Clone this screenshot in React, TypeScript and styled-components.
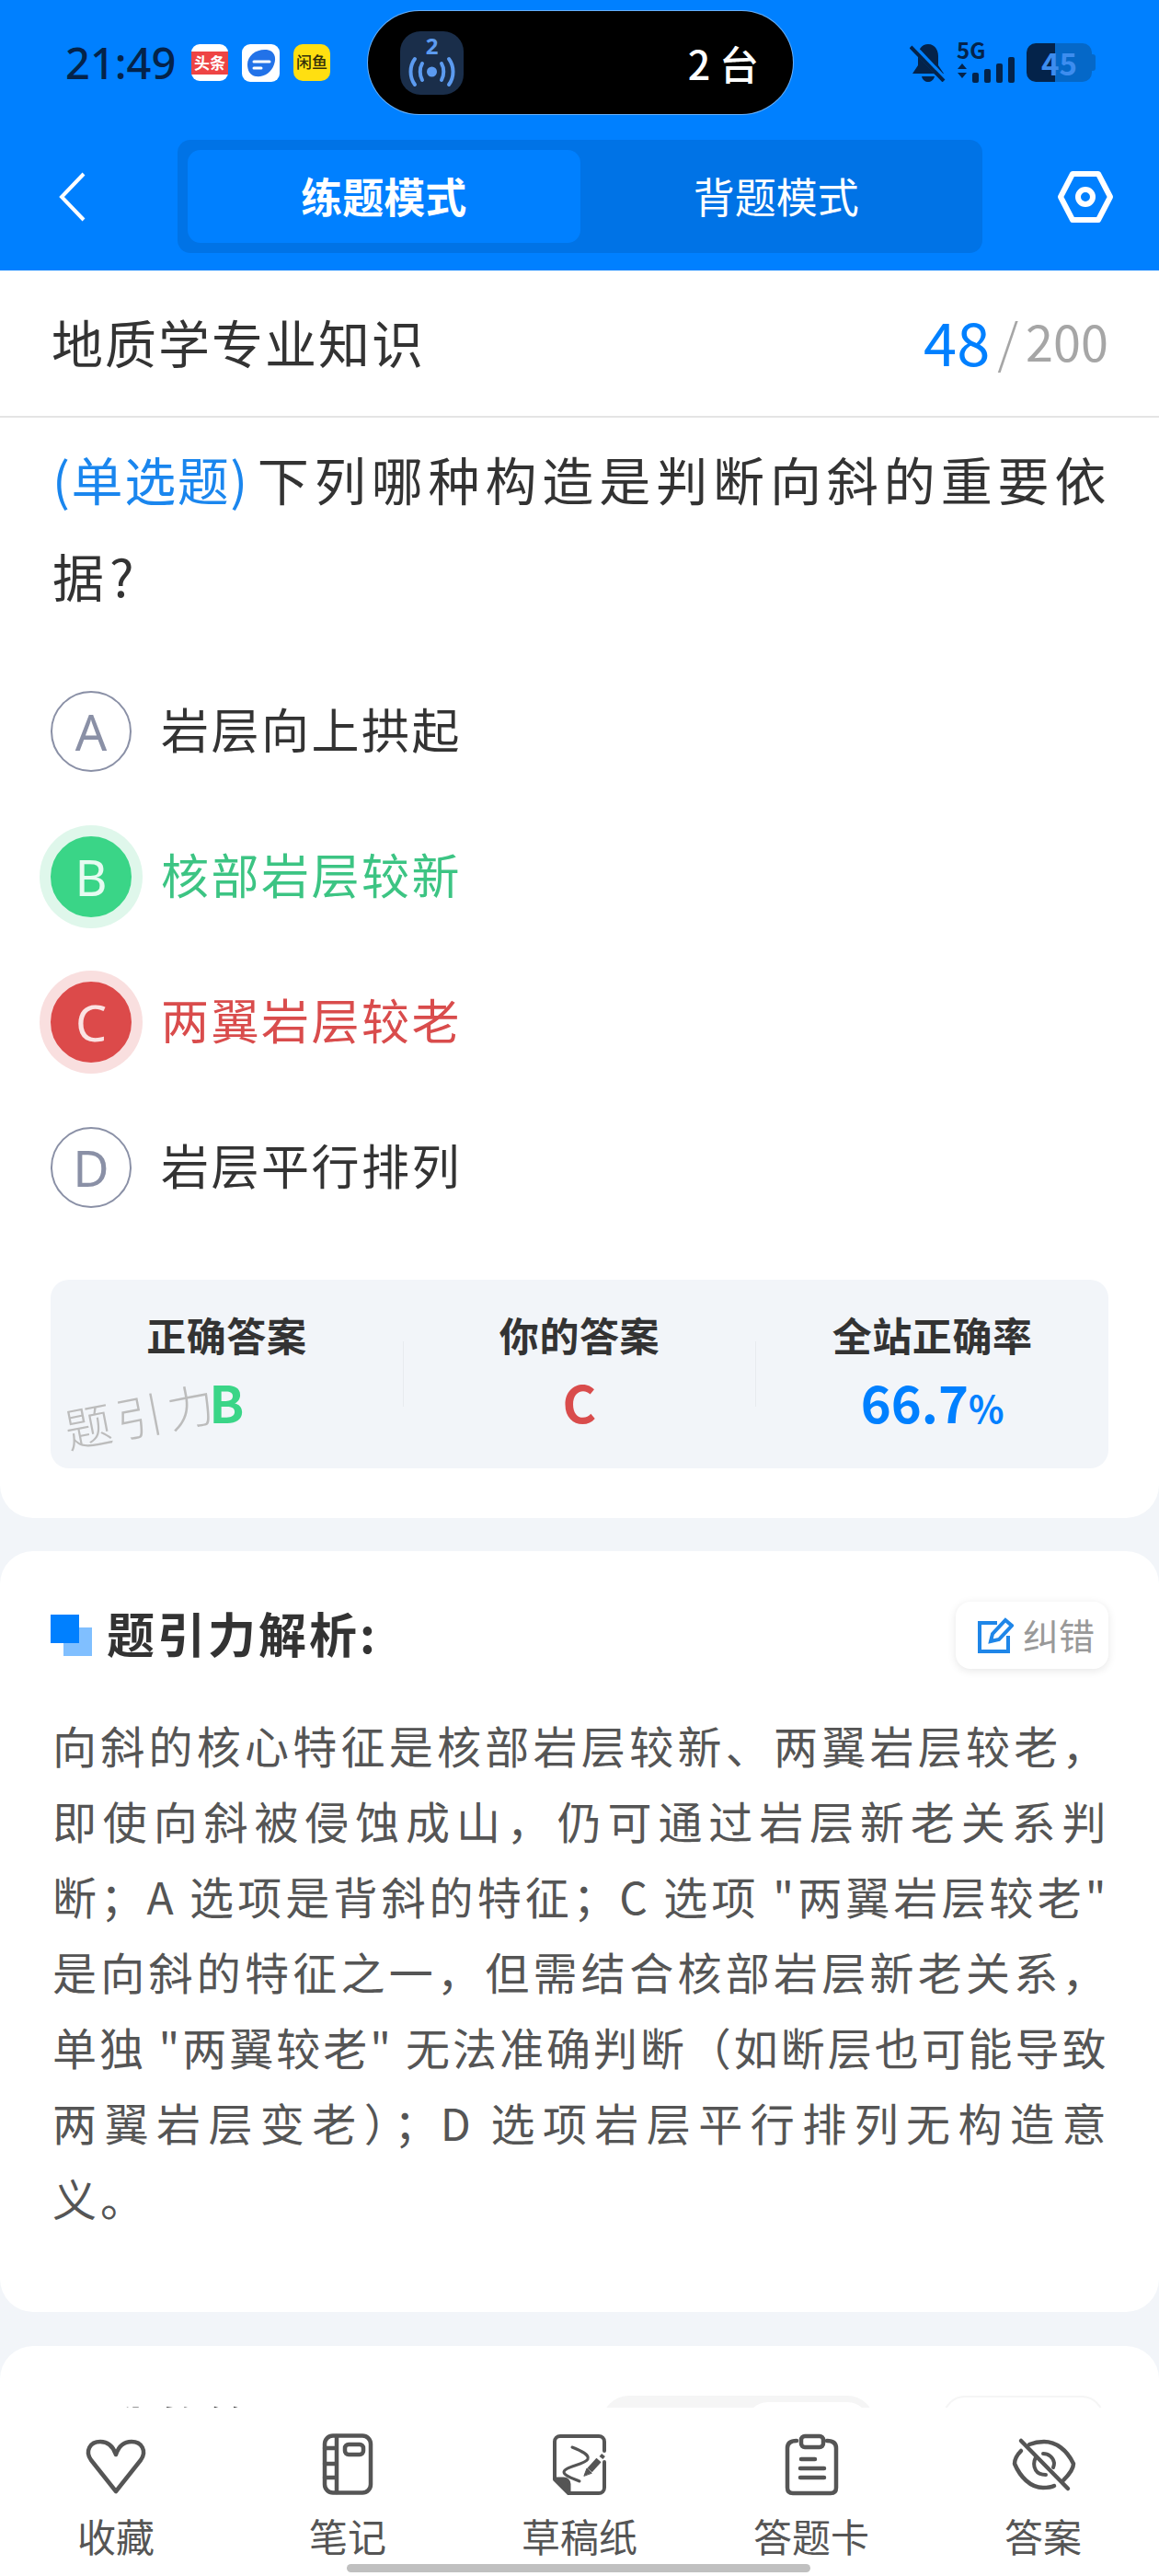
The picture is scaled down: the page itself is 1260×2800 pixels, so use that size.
import styled, { createGlobalStyle } from 'styled-components';

const FONT = '"Noto Sans CJK SC", "Noto Sans", sans-serif';
const BLUE = '#0080ff';
const ICON = '#555555';
const STATUS = '#04234a';

const GlobalStyle = createGlobalStyle`
  html, body {
    margin: 0;
    padding: 0;
    background: #f2f5f9;
    font-family: ${FONT};
  }
  * {
    box-sizing: border-box;
  }
`;

type OptionState = 'normal' | 'right' | 'wrong';

const options: { key: string; text: string; state: OptionState }[] = [
  { key: 'A', text: '岩层向上拱起', state: 'normal' },
  { key: 'B', text: '核部岩层较新', state: 'right' },
  { key: 'C', text: '两翼岩层较老', state: 'wrong' },
  { key: 'D', text: '岩层平行排列', state: 'normal' },
];

const optionColors = {
  normal: { text: '#333333', fill: 'transparent', ring: 'transparent', letter: '#8a90a6', border: '#8a90a6' },
  right: { text: '#3cc483', fill: '#3ad587', ring: '#dff7eb', letter: '#e6fbf1', border: '#3ad587' },
  wrong: { text: '#d94c4c', fill: '#dc4a4a', ring: '#f9dfdf', letter: '#fbe3e3', border: '#dc4a4a' },
};

const analysisLines = [
  '向斜的核心特征是核部岩层较新、两翼岩层较老，',
  '即使向斜被侵蚀成山，仍可通过岩层新老关系判',
  '断；A 选项是背斜的特征；C 选项 "两翼岩层较老"',
  '是向斜的特征之一，但需结合核部岩层新老关系，',
  '单独 "两翼较老" 无法准确判断（如断层也可能导致',
  '两翼岩层变老）；D 选项岩层平行排列无构造意',
  '义。',
];

const HeartIcon = () => (
  <TabSvg viewBox="0 0 72 72" width={72} height={72}>
    <path d="M36 64 L9 30 C2 20 8 10 19 10 C27 10 33 15 36 24 C39 15 45 10 53 10 C64 10 70 20 63 30 Z" />
  </TabSvg>
);

const NoteIcon = () => (
  <TabSvg viewBox="0 0 72 72" width={72} height={72}>
    <rect x="11" y="3.5" width="50" height="62" rx="9" />
    <path d="M24 4 V65 M11 17 H24 M11 34 H24 M11 49 H24" />
    <rect x="33" y="13" width="20" height="11" rx="4" />
  </TabSvg>
);

const DraftIcon = () => (
  <TabSvg viewBox="0 0 72 72" width={72} height={72}>
    <path d="M63 20 V10 A6 6 0 0 0 57 4 H15 A6 6 0 0 0 9 10 V51 L24 66 H57 A6 6 0 0 0 63 60 V32" strokeWidth={4} />
    <path d="M9 50 H19 A6 6 0 0 1 25 56 V66 Z" fill={ICON} strokeWidth={3} />
    <path d="M28 16 C38 20 47 24 45 29 C42 35 19 37 19 43 C19 47 29 50 36 53" strokeWidth={3} />
    <path d="M47 41 L57 30" strokeWidth={7} strokeLinecap="butt" />
    <path d="M41 47 L44 39 L49 44 Z" fill={ICON} strokeWidth={1} />
    <path d="M59.5 27.5 L62 24.5" strokeWidth={5} strokeLinecap="butt" />
  </TabSvg>
);

const CardIcon = () => (
  <TabSvg viewBox="0 0 72 72" width={72} height={72}>
    <path d="M20 9 C13 9 10 12 10 17 V60 C10 64 12 66 16 66 H57 C61 66 63 64 63 60 V17 C63 12 60 9 53 9" />
    <rect x="25" y="4" width="24" height="12" rx="4" />
    <path d="M25 29 H40 M24 39 H50 M24 49 H50" strokeWidth={4.5} />
  </TabSvg>
);

const EyeOffIcon = () => (
  <TabSvg viewBox="0 0 76 72" width={76} height={72}>
    <path d="M7 34 C7 30 10 24 14 20 M23 13 C28 11 34 10 39 10 C52 10 64 19 71 34 C71 39 66 46 60 52 M50 58 C46 60 42 60 38 60 C24 60 13 48 7 34" />
    <path d="M14 9 L65 61" />
    <path d="M30 27 C28 31 27 36 30 41 C33 46 38 46 41 46 M38 23 C44 23 49 27 50 33 C50 35 50 36 49 38" strokeWidth={4} />
  </TabSvg>
);

const tabs = [
  { label: '收藏', icon: <HeartIcon /> },
  { label: '笔记', icon: <NoteIcon /> },
  { label: '草稿纸', icon: <DraftIcon /> },
  { label: '答题卡', icon: <CardIcon /> },
  { label: '答案', icon: <EyeOffIcon /> },
];

const App = () => {
  return (
    <Page>
      <GlobalStyle />
      <Header>
        <StatusBar>
          <Time>21:49</Time>
          <AppIcons>
            <ToutiaoIcon>
              <span>头条</span>
            </ToutiaoIcon>
            <svg viewBox="0 0 41 41" width={41} height={41}>
              <rect width="41" height="41" rx="9" fill="#fff" />
              <path d="M6 22 C6 12 16 5 27 6 C35 7 38 14 35 22 C32 31 24 36 15 35 C9 34 6 29 6 22 Z" fill="#2272e8" />
              <path d="M13 19 H30 M13 26 H21" stroke="#fff" strokeWidth={3} strokeLinecap="round" />
            </svg>
            <XianyuIcon>闲鱼</XianyuIcon>
          </AppIcons>
          <Island>
            <LiveBadge>
              <svg viewBox="0 0 69 69" width={69} height={69}>
                <text x="34.5" y="25" textAnchor="middle" fontSize="24" fontWeight="700" fill="#5c9bf0" fontFamily="Noto Sans">
                  2
                </text>
                <circle cx="34.5" cy="44" r="5.5" fill="#5c9bf0" />
                <g fill="none" stroke="#5c9bf0" strokeWidth="4" strokeLinecap="round">
                  <path d="M24 35 C21 40 21 48 24 53 M45 35 C48 40 48 48 45 53" />
                  <path d="M16 30 C10 38 10 50 16 58 M53 30 C59 38 59 50 53 58" />
                </g>
              </svg>
            </LiveBadge>
            <IslandText>2 台</IslandText>
          </Island>
          <StatusRight>
            <svg viewBox="0 0 40 42" width={40} height={42}>
              <path d="M20 1 C27 1 31 7 31 14 V24 L37 33 H3 L9 24 V14 C9 7 13 1 20 1 Z" fill={STATUS} />
              <path d="M13 36 H27 C26 40 23 42 20 42 C17 42 14 40 13 36 Z" fill={STATUS} />
              <path d="M2 2 L38 40" stroke={BLUE} strokeWidth={7} />
              <path d="M1 4 L37 41" stroke={STATUS} strokeWidth={4} />
            </svg>
            <SignalGroup>
              <FiveG>5G</FiveG>
              <svg viewBox="0 0 66 29" width={66} height={29}>
                <path d="M2 13 L7 7 L12 13 Z M2 17 L12 17 L7 23 Z" fill={STATUS} />
                <rect x="18" y="17" width="7" height="11" rx="2" fill={STATUS} />
                <rect x="31" y="13" width="7" height="15" rx="2" fill={STATUS} />
                <rect x="44" y="7" width="7" height="21" rx="2" fill={STATUS} />
                <rect x="57" y="0" width="7" height="28" rx="2" fill={STATUS} />
              </svg>
            </SignalGroup>
            <Battery>
              <BatteryValue>45</BatteryValue>
            </Battery>
            <BatteryCap />
          </StatusRight>
        </StatusBar>
        <NavBar>
          <svg viewBox="0 0 30 54" width={30} height={54}>
            <path d="M28 2 L4 27 L28 52" fill="none" stroke="#fff" strokeWidth={4} />
          </svg>
          <Segment>
            <SegmentTab $active>练题模式</SegmentTab>
            <SegmentTab>背题模式</SegmentTab>
          </Segment>
          <SettingIcon viewBox="0 0 66 60" width={66} height={60}>
            <path d="M6 30 L19 5 H47 L60 30 L47 55 H19 Z" />
            <circle cx="33" cy="30" r="8" />
          </SettingIcon>
        </NavBar>
      </Header>

      <QuestionCard>
        <SubjectRow>
          <SubjectName>地质学专业知识</SubjectName>
          <Progress>
            <ProgressNow>48</ProgressNow>
            <ProgressSlash>/</ProgressSlash>
            <ProgressTotal>200</ProgressTotal>
          </Progress>
        </SubjectRow>
        <QuestionBody>
          <QuestionText>
            <QuestionType>(单选题)</QuestionType>
            下列哪种构造是判断向斜的重要依据?
          </QuestionText>
          <OptionList>
            {options.map((option) => (
              <OptionRow key={option.key}>
                <OptionBadge $state={option.state}>{option.key}</OptionBadge>
                <OptionText $state={option.state}>{option.text}</OptionText>
              </OptionRow>
            ))}
          </OptionList>
          <Stats>
            <StatColumn>
              <StatLabel>正确答案</StatLabel>
              <StatValue $color="#3ad587">B</StatValue>
            </StatColumn>
            <StatDivider />
            <StatColumn>
              <StatLabel>你的答案</StatLabel>
              <StatValue $color="#d94c4c">C</StatValue>
            </StatColumn>
            <StatDivider />
            <StatColumn>
              <StatLabel>全站正确率</StatLabel>
              <StatValue $color={BLUE}>
                66.7<Percent>%</Percent>
              </StatValue>
            </StatColumn>
            <Watermark>题引力</Watermark>
          </Stats>
        </QuestionBody>
      </QuestionCard>

      <AnalysisCard>
        <SectionHead>
          <SectionTitle>
            <TitleMark>
              <svg viewBox="0 0 45 45" width={45} height={45}>
                <rect x="14" y="14" width="31" height="31" fill="#80bfff" />
                <rect x="0" y="0" width="31" height="31" fill={BLUE} />
              </svg>
            </TitleMark>
            <TitleText>题引力解析:</TitleText>
          </SectionTitle>
          <FixButton>
            <svg viewBox="0 0 40 40" width={40} height={40}>
              <g fill="none" stroke="#1f86e8" strokeWidth={4}>
                <path d="M22 6 H3 V37 H34 V20" />
                <path d="M15 26 L17 18 L31 3 L38 9 L24 24 Z" />
              </g>
            </svg>
            <FixLabel>纠错</FixLabel>
          </FixButton>
        </SectionHead>
        <AnalysisText>
          {analysisLines.map((line, index) => (
            <AnalysisLine key={line} $last={index === analysisLines.length - 1}>
              {line}
            </AnalysisLine>
          ))}
        </AnalysisText>
      </AnalysisCard>

      <NoteCard>
        <NoteTitle>我的笔记</NoteTitle>
        <NoteSwitch>
          <NoteSwitchThumb />
        </NoteSwitch>
        <NoteButton />
      </NoteCard>

      <TabBar>
        {tabs.map((tab) => (
          <TabItem key={tab.label}>
            {tab.icon}
            <TabLabel>{tab.label}</TabLabel>
          </TabItem>
        ))}
        <HomeIndicator />
      </TabBar>
    </Page>
  );
};

export default App;

const Page = styled.div`
  position: relative;
  width: 1260px;
  height: 2800px;
  overflow: hidden;
  background: #f2f5f9;
`;

const Header = styled.header`
  height: 294px;
  background: ${BLUE};
`;

const StatusBar = styled.div`
  display: flex;
  align-items: center;
  height: 136px;
  margin-bottom: 16px;
  padding-left: 71px;
`;

const Time = styled.div`
  width: 118px;
  font-size: 47px;
  line-height: 50px;
  font-weight: 500;
  color: ${STATUS};
  font-family: 'Noto Sans', sans-serif;
  white-space: nowrap;
`;

const AppIcons = styled.div`
  display: flex;
  align-items: center;
  gap: 15px;
  margin-left: 19px;
`;

const ToutiaoIcon = styled.div`
  display: flex;
  align-items: center;
  justify-content: center;
  width: 40px;
  height: 40px;
  border-radius: 9px;
  background: #fff;
  span {
    display: block;
    width: 40px;
    height: 25px;
    background: #ee4444;
    color: #fff;
    font-size: 17px;
    line-height: 24px;
    font-weight: 700;
    text-align: center;
    white-space: nowrap;
  }
`;

const XianyuIcon = styled.div`
  width: 40px;
  height: 40px;
  border-radius: 10px;
  background: #ffdf11;
  color: #33300a;
  font-size: 17px;
  line-height: 38px;
  font-weight: 500;
  text-align: center;
  white-space: nowrap;
`;

const Island = styled.div`
  display: flex;
  align-items: center;
  width: 462px;
  height: 112px;
  margin-left: 41px;
  padding: 0 37px 0 35px;
  border-radius: 56px;
  background: #000;
  box-shadow: 0 0 0 1px rgba(190, 215, 245, 0.55);
`;

const LiveBadge = styled.div`
  display: flex;
  width: 69px;
  height: 69px;
  border-radius: 22px;
  background: #1a2e4a;
`;

const IslandText = styled.div`
  margin-left: auto;
  color: #fff;
  font-size: 43px;
  line-height: 50px;
  font-weight: 500;
  white-space: nowrap;
`;

const StatusRight = styled.div`
  display: flex;
  align-items: center;
  margin-left: 127px;
`;

const SignalGroup = styled.div`
  display: flex;
  flex-direction: column;
  margin-left: 10px;
  width: 66px;
`;

const FiveG = styled.div`
  margin-left: 1px;
  font-size: 24px;
  line-height: 17px;
  font-weight: 700;
  color: ${STATUS};
`;

const Battery = styled.div`
  display: flex;
  align-items: center;
  justify-content: center;
  width: 71px;
  height: 42px;
  margin-left: 11px;
  border-radius: 10px;
  background: linear-gradient(90deg, #04234a 0 43%, #0568c8 43% 100%);
`;

const BatteryValue = styled.span`
  font-size: 33px;
  line-height: 42px;
  font-weight: 700;
  color: #3d8def;
`;

const BatteryCap = styled.div`
  width: 4px;
  height: 18px;
  border-radius: 0 3px 3px 0;
  background: #0568c8;
`;

const NavBar = styled.div`
  display: flex;
  align-items: center;
  height: 123px;
  padding-left: 63px;
`;

const Segment = styled.div`
  display: grid;
  grid-template-columns: 1fr 1fr;
  width: 875px;
  height: 123px;
  margin-left: 100px;
  padding: 11px;
  border-radius: 14px;
  background: #0073e6;
`;

const SegmentTab = styled.div<{ $active?: boolean }>`
  display: flex;
  align-items: center;
  justify-content: center;
  padding-bottom: 3px;
  border-radius: 14px;
  background: ${(p) => (p.$active ? BLUE : 'transparent')};
  color: #fff;
  font-size: 45px;
  font-weight: ${(p) => (p.$active ? 700 : 400)};
`;

const SettingIcon = styled.svg`
  margin-left: 79px;
  fill: none;
  stroke: #fff;
  stroke-width: 6;
  stroke-linejoin: round;
`;

const QuestionCard = styled.section`
  height: 1356px;
  border-radius: 0 0 36px 36px;
  background: #fff;
`;

const SubjectRow = styled.div`
  display: flex;
  align-items: center;
  justify-content: space-between;
  height: 160px;
  padding: 0 55px 6px 56px;
  border-bottom: 2px solid #e4e4e4;
`;

const SubjectName = styled.div`
  font-size: 56px;
  letter-spacing: 2px;
  color: #333;
`;

const Progress = styled.div`
  display: flex;
  align-items: center;
  line-height: 80px;
`;

const ProgressNow = styled.span`
  margin-left: 1px;
  font-size: 65px;
  color: ${BLUE};
`;

const ProgressSlash = styled.span`
  margin: 0 8px;
  font-size: 58px;
  font-weight: 300;
  color: #a6a6a6;
`;

const ProgressTotal = styled.span`
  font-size: 54px;
  color: #a6a6a6;
`;

const QuestionBody = styled.div`
  padding: 13px 55px 0;
`;

const QuestionText = styled.div`
  height: 210px;
  margin-right: -10px;
  padding-left: 2px;
  font-size: 56px;
  line-height: 105px;
  letter-spacing: 5.9px;
  color: #333;
`;

const QuestionType = styled.span`
  margin-right: 9px;
  color: #1a86ee;
  letter-spacing: 1.6px;
`;

const OptionList = styled.div`
  display: flex;
  flex-direction: column;
  gap: 70px;
  margin-top: 74px;
`;

const OptionRow = styled.div`
  display: flex;
  align-items: center;
  height: 88px;
`;

const OptionBadge = styled.div<{ $state: OptionState }>`
  display: flex;
  align-items: center;
  justify-content: center;
  width: 88px;
  height: 88px;
  border-radius: 50%;
  border: 2px solid ${(p) => optionColors[p.$state].border};
  background: ${(p) => optionColors[p.$state].fill};
  box-shadow: 0 0 0 12px ${(p) => optionColors[p.$state].ring};
  color: ${(p) => optionColors[p.$state].letter};
  font-size: 54px;
  font-weight: 400;
  font-family: 'Noto Sans', sans-serif;
`;

const OptionText = styled.div<{ $state: OptionState }>`
  margin-left: 32px;
  padding-bottom: 7px;
  font-size: 52px;
  letter-spacing: 2.5px;
  color: ${(p) => optionColors[p.$state].text};
`;

const Stats = styled.div`
  position: relative;
  display: grid;
  grid-template-columns: 1fr 1px 1fr 1px 1fr;
  height: 205px;
  margin-top: 78px;
  border-radius: 20px;
  background: #f2f5f9;
`;

const StatColumn = styled.div`
  display: flex;
  flex-direction: column;
  align-items: center;
  padding-top: 34px;
`;

const StatDivider = styled.div`
  height: 71px;
  margin-top: 67px;
  background: #e8ebef;
`;

const StatLabel = styled.div`
  font-size: 43px;
  line-height: 50px;
  font-weight: 700;
  color: #333;
  letter-spacing: 0.6px;
`;

const StatValue = styled.div<{ $color: string }>`
  margin-top: 13px;
  font-size: 56px;
  line-height: 70px;
  font-weight: 700;
  color: ${(p) => p.$color};
`;

const Percent = styled.span`
  font-size: 40px;
`;

const Watermark = styled.div`
  position: absolute;
  left: 14px;
  top: 118px;
  transform: rotate(-11deg);
  font-size: 51px;
  line-height: 56px;
  font-weight: 300;
  letter-spacing: 5.5px;
  color: #bcbcbc;
  white-space: nowrap;
`;

const AnalysisCard = styled.section`
  height: 827px;
  margin-top: 36px;
  padding: 55px 55px 0;
  border-radius: 36px;
  background: #fff;
`;

const SectionHead = styled.div`
  display: flex;
  align-items: center;
  justify-content: space-between;
  height: 73px;
`;

const SectionTitle = styled.div`
  display: flex;
  align-items: center;
`;

const TitleMark = styled.div`
  display: flex;
  margin-right: 16px;
`;

const TitleText = styled.div`
  padding-bottom: 6px;
  font-size: 52px;
  line-height: 60px;
  font-weight: 700;
  letter-spacing: 3px;
  color: #333;
`;

const FixButton = styled.div`
  display: flex;
  align-items: center;
  gap: 10px;
  width: 166px;
  height: 73px;
  padding-left: 23px;
  border-radius: 16px;
  background: #fff;
  box-shadow: 0 2px 10px rgba(0, 0, 0, 0.1);
  color: #999;
  font-size: 39px;
  white-space: nowrap;
`;

const FixLabel = styled.span`
  padding-bottom: 4px;
`;

const AnalysisText = styled.div`
  margin-top: 41px;
  padding-left: 2px;
  font-size: 48px;
  line-height: 82px;
  color: #555;
`;

const AnalysisLine = styled.div<{ $last?: boolean }>`
  letter-spacing: ${(p) => (p.$last ? '4px' : '2.5px')};
  text-align: justify;
  text-align-last: ${(p) => (p.$last ? 'left' : 'justify')};
`;

const NoteCard = styled.section`
  display: flex;
  align-items: flex-start;
  height: 400px;
  margin-top: 37px;
  padding: 54px 60px 0 116px;
  border-radius: 36px;
  background: #fff;
`;

const NoteTitle = styled.div`
  margin-top: 9px;
  font-size: 52px;
  line-height: 52px;
  font-weight: 700;
  letter-spacing: 2px;
  color: #333;
  white-space: nowrap;
`;

const NoteSwitch = styled.div`
  display: flex;
  justify-content: flex-end;
  width: 297px;
  height: 80px;
  margin-left: auto;
  padding: 7px 6px;
  border-radius: 30px;
  background: #f5f5f5;
`;

const NoteSwitchThumb = styled.div`
  width: 134px;
  height: 66px;
  border-radius: 24px;
  background: #fff;
`;

const NoteButton = styled.div`
  width: 175px;
  height: 80px;
  margin-left: 74px;
  border-radius: 24px;
  border: 2px solid #f5f5f5;
  background: #fff;
`;

const TabBar = styled.nav`
  position: absolute;
  left: 0;
  bottom: 0;
  display: grid;
  grid-template-columns: repeat(5, 1fr);
  width: 1260px;
  height: 183px;
  background: #fff;
`;

const TabItem = styled.div`
  display: flex;
  flex-direction: column;
  align-items: center;
  padding-top: 27px;
`;

const TabSvg = styled.svg`
  fill: none;
  stroke: ${ICON};
  stroke-width: 4.5;
  stroke-linecap: round;
  stroke-linejoin: round;
`;

const TabLabel = styled.div`
  margin-top: 15px;
  font-size: 42px;
  line-height: 50px;
  color: ${ICON};
  white-space: nowrap;
`;

const HomeIndicator = styled.div`
  position: absolute;
  left: 377px;
  bottom: 4px;
  width: 504px;
  height: 9px;
  border-radius: 5px;
  background: #c0c0c0;
`;
